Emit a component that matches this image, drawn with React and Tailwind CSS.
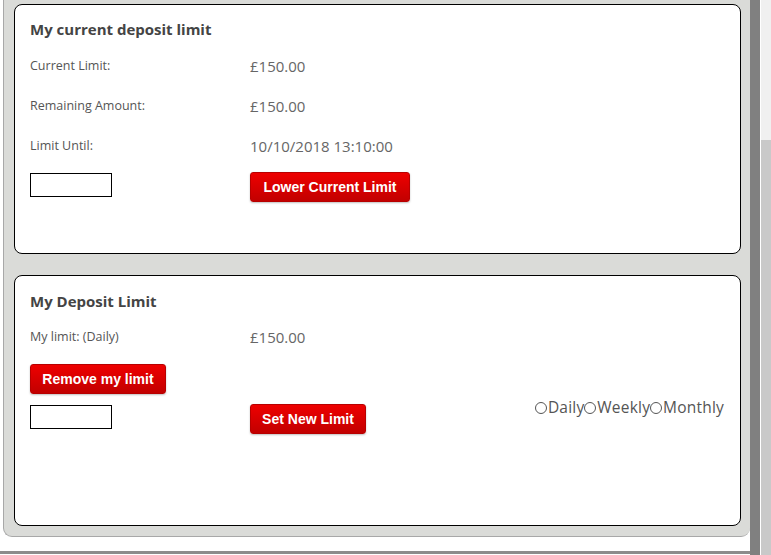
import React from "react";

const font = { fontFamily: '"Open Sans", "Noto Sans", sans-serif' };

function RedButton({ children, className = "" }) {
  return (
    <button
      className={
        "h-[30px] px-0 flex items-center justify-center whitespace-nowrap rounded-[3px] border border-[#b80000] bg-gradient-to-b from-[#ee0000] to-[#c20000] text-white text-[14px] font-bold leading-none shadow-[0_1px_2px_rgba(0,0,0,0.25)] " +
        className
      }
      style={{ fontFamily: '"Liberation Sans", Arial, sans-serif' }}
    >
      {children}
    </button>
  );
}

function Row({ label, value }) {
  return (
    <div className="flex items-center h-[40px]">
      <div className="w-[220px] text-[12.5px] text-[#555]">{label}</div>
      <div className="text-[15px] text-[#666]">{value}</div>
    </div>
  );
}

function Radio({ label }) {
  return (
    <span className="flex items-center">
      <span className="inline-block w-[12px] h-[12px] rounded-full border border-[#555] bg-white mr-[1px]" />
      <span>{label}</span>
    </span>
  );
}

export default function App() {
  return (
    <div className="w-[771px] h-[555px] bg-white flex overflow-hidden" style={font}>
      <div className="w-[750px] flex flex-col">
        <div className="ml-[3px] h-[537px] bg-[#dadbd8] border-l border-b border-[#a8a8a8] rounded-b-[9px] pl-[10px] pr-[9px] pt-[4px] flex flex-col">
          {/* Card 1 */}
          <div className="h-[250px] bg-white border border-black rounded-[8px] pl-[15px] pr-[16px] pt-[15px] flex flex-col">
            <div className="h-[18px] leading-[18px] text-[15px] font-bold text-[#444]">
              My current deposit limit
            </div>
            <div className="mt-[8px]">
              <Row label="Current Limit:" value="£150.00" />
              <Row label="Remaining Amount:" value="£150.00" />
              <Row label="Limit Until:" value="10/10/2018 13:10:00" />
            </div>
            <div className="mt-[6px] flex items-start">
              <div className="w-[220px]">
                <div className="mt-[1px] w-[82px] h-[24px] border border-black bg-white" />
              </div>
              <RedButton className="w-[160px]">Lower Current Limit</RedButton>
            </div>
          </div>

          {/* Card 2 */}
          <div className="mt-[21px] h-[251px] bg-white border border-black rounded-[8px] pl-[15px] pr-[16px] pt-[16px] flex flex-col">
            <div className="h-[18px] leading-[18px] text-[15px] font-bold text-[#444]">
              My Deposit Limit
            </div>
            <div className="mt-[7px]">
              <Row label="My limit: (Daily)" value="£150.00" />
            </div>
            <div className="mt-[7px] flex">
              <RedButton className="w-[136px]">Remove my limit</RedButton>
            </div>
            <div className="mt-[5px] flex items-start">
              <div className="w-[220px]">
                <div className="mt-[6px] w-[82px] h-[24px] border border-black bg-white" />
              </div>
              <RedButton className="mt-[5px] w-[116px]">Set New Limit</RedButton>
              <div className="ml-auto h-[18px] flex items-center text-[15.5px] text-[#555] tracking-[0.2px]">
                <Radio label="Daily" />
                <Radio label="Weekly" />
                <Radio label="Monthly" />
              </div>
            </div>
          </div>
        </div>
        <div className="mt-[14px] h-[3px] bg-[#8c8c8c]" />
      </div>
      <div className="w-[10px] bg-[#808080]" />
      <div className="w-[1px] bg-white" />
      <div className="w-[10px] flex flex-col">
        <div className="h-[140px] bg-[#f0f0f0]" />
        <div className="flex-1 bg-[#c9c9c9]" />
      </div>
    </div>
  );
}
